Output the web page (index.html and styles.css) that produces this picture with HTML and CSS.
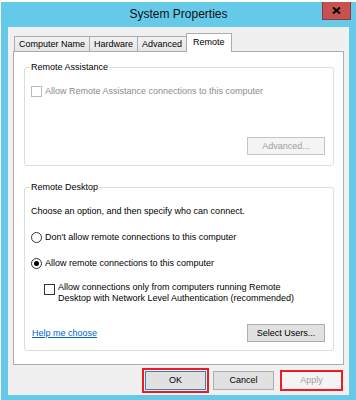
FILE: index.html
```html
<!doctype html>
<html lang="en">
  <head>
    <meta charset="UTF-8" />
    <meta name="viewport" content="width=device-width, initial-scale=1.0" />
    <title>System Properties</title>
    <link rel="stylesheet" href="styles.css">
  </head>
  <body>
    <div class="window">
      <div class="titlebar">
        <span></span>
        <div class="title">System Properties</div>
        <button class="close" aria-label="Close">
          <svg class="close-icon" viewBox="0 0 9 7">
            <path d="M1 0.5 L8 6.5 M8 0.5 L1 6.5" />
          </svg>
        </button>
      </div>

      <div class="client">
        <div class="tabs">
          <div class="tab">Computer Name</div>
          <div class="tab">Hardware</div>
          <div class="tab">Advanced</div>
          <div class="tab tab-active">Remote</div>
        </div>

        <div class="panel">
          <fieldset class="group">
            <legend>Remote Assistance</legend>
            <div class="option option-disabled">
              <span class="check"></span>
              <span>Allow Remote Assistance connections to this computer</span>
            </div>
            <div class="group-actions">
              <button class="btn btn-wide" disabled>Advanced...</button>
            </div>
          </fieldset>

          <fieldset class="group">
            <legend>Remote Desktop</legend>
            <p class="hint">Choose an option, and then specify who can connect.</p>
            <div class="option option-spaced">
              <span class="radio"></span>
              <span>Don't allow remote connections to this computer</span>
            </div>
            <div class="option option-spaced">
              <span class="radio radio-on"></span>
              <span>Allow remote connections to this computer</span>
            </div>
            <div class="option option-sub">
              <span class="check"></span>
              <span>Allow connections only from computers running Remote<br>Desktop with Network Level Authentication (recommended)</span>
            </div>
            <div class="group-actions group-actions-split">
              <a href="#" class="link">Help me choose</a>
              <button class="btn btn-wide">Select Users...</button>
            </div>
          </fieldset>
        </div>

        <div class="dialog-buttons">
          <button class="btn btn-dialog btn-default marked">OK</button>
          <button class="btn btn-dialog">Cancel</button>
          <button class="btn btn-dialog marked-tight" disabled>Apply</button>
        </div>
      </div>
    </div>
  </body>
</html>
```

FILE: styles.css
```css
* {
  margin: 0;
  padding: 0;
  box-sizing: border-box;
}

html,
body {
  height: 100%;
  overflow: hidden;
  background: #ffffff;
  font-family: 'Liberation Sans', Arial, sans-serif;
  font-size: 9px;
  color: #000;
}

.window {
  margin: 2px 0 0 1px;
  background: #65c9e9;
  padding-bottom: 8px;
}

/* Title bar */
.titlebar {
  display: grid;
  grid-template-columns: 1fr auto 1fr;
  height: 25px;
}

.title {
  font-size: 12px;
  line-height: 25px;
  color: #111;
}

.close {
  justify-self: end;
  align-self: start;
  width: 29px;
  height: 18px;
  margin-right: 5px;
  background: #c75050;
  border: 1px solid #8f3a3a;
  border-top: none;
  display: flex;
  align-items: center;
  justify-content: center;
}

.close-icon {
  width: 9px;
  height: 7px;
  stroke: #000;
  stroke-width: 2;
  fill: none;
}

/* Client area */
.client {
  margin: 0 7px;
  background: #f0f0f0;
  padding: 6px 5px 5px;
}

.tabs {
  display: flex;
  align-items: flex-end;
  height: 19px;
  padding-left: 1px;
  margin-bottom: -1px;
}

.tab {
  height: 15px;
  margin-bottom: 1px;
  margin-left: -1px;
  padding: 0 4px;
  line-height: 14px;
  border: 1px solid #acacac;
  border-bottom: none;
  background: linear-gradient(#f2f2f2, #e6e6e6);
}

.tab:first-child {
  margin-left: 0;
}

.tab-active {
  position: relative;
  z-index: 1;
  height: 19px;
  margin-bottom: 0;
  padding: 0 6px;
  line-height: 16px;
  background: #fff;
}

.panel {
  height: 314px;
  background: #fff;
  border: 1px solid #acacac;
  padding: 9px 9px 0 10px;
}

/* Group boxes */
.group {
  border: 1px solid #d5dfe5;
  border-radius: 3px;
  padding: 11px 8px 10px 6px;
  min-width: 0;
}

.group + .group {
  margin-top: 15px;
  padding-bottom: 8px;
}

.group legend {
  padding: 0 1px;
  margin-left: -1px;
  line-height: 12px;
}

.hint {
  line-height: 14px;
}

.option {
  display: flex;
  align-items: center;
  line-height: 14px;
}

.option-spaced {
  margin-top: 12px;
}

.option-disabled {
  color: #8c8c8c;
}

.option-sub {
  align-items: flex-start;
  margin-top: 12px;
  padding-left: 13px;
  line-height: 11px;
}

.option-sub .check {
  margin-top: 2px;
}

.check {
  flex: none;
  width: 11px;
  height: 11px;
  margin-right: 3px;
  border: 1px solid #333;
  background: #fff;
}

.option-disabled .check {
  border-color: #bcbcbc;
}

.radio {
  flex: none;
  width: 11px;
  height: 11px;
  margin-right: 3px;
  border: 1px solid #333;
  border-radius: 50%;
  background: #fff;
  display: flex;
  align-items: center;
  justify-content: center;
}

.radio-on::after {
  content: '';
  width: 5px;
  height: 5px;
  border-radius: 50%;
  background: #000;
}

.group-actions {
  display: flex;
  justify-content: flex-end;
  align-items: center;
  margin-top: 39px;
}

.group-actions-split {
  justify-content: space-between;
  margin-top: 20px;
}

.link {
  color: #0066cc;
  text-decoration: underline;
  margin-left: 1px;
}

/* Buttons */
.btn {
  font: inherit;
  height: 18px;
  padding: 0 6px;
  line-height: 16px;
  color: #000;
  background: #e1e1e1;
  border: 1px solid #adadad;
}

.btn:disabled {
  color: #a0a0a0;
  background: #f4f4f4;
  border-color: #c4c4c4;
}

.btn-wide {
  width: 78px;
}

.dialog-buttons {
  display: flex;
  justify-content: flex-end;
  gap: 7px;
  margin-top: 6px;
  padding-right: 2px;
}

.btn-dialog {
  width: 61px;
  height: 19px;
  line-height: 17px;
}

.btn-default {
  border-color: #3c7fb1;
}

.marked {
  outline: 2px solid #ec1c24;
  outline-offset: 1px;
}

.marked-tight {
  outline: 2px solid #ec1c24;
  outline-offset: -1px;
}
```
